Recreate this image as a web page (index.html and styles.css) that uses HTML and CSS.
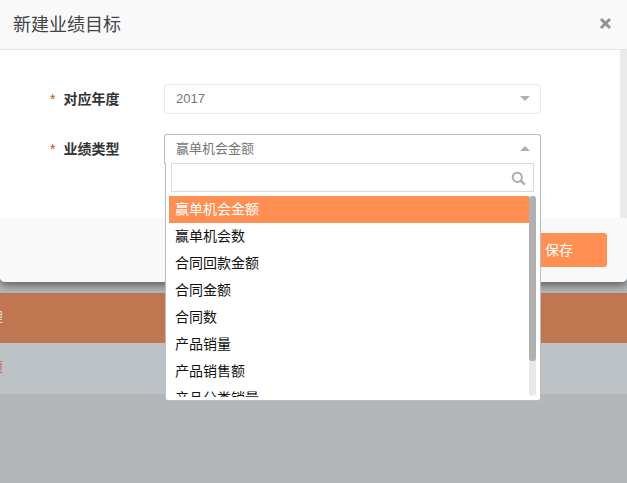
FILE: index.html
```html
<!DOCTYPE html>
<html lang="zh-CN">
  <head>
    <meta charset="UTF-8" />
    <meta name="viewport" content="width=device-width, initial-scale=1.0" />
    <title>新建业绩目标</title>
    <link rel="stylesheet" href="styles.css">
  </head>
  <body>
    <!-- page behind the backdrop -->
    <div class="page">
      <div class="band"><span>管理</span></div>
      <div class="row"><span>选项</span></div>
    </div>

    <div class="modal">
      <header class="modal-head">
        <h1>新建业绩目标</h1>
        <svg class="close" width="13" height="13" viewBox="0 0 13 13">
          <path d="M2 2l9 9M11 2l-9 9" stroke="#8f9397" stroke-width="3" fill="none" />
        </svg>
      </header>
      <div class="modal-body">
        <div class="field">
          <label><i>*</i>对应年度</label>
          <div class="select">
            <span>2017</span>
            <b class="caret down"></b>
          </div>
        </div>
        <div class="field">
          <label><i>*</i>业绩类型</label>
          <div class="select open">
            <span>赢单机会金额</span>
            <b class="caret up"></b>
          </div>
        </div>
      </div>
      <footer class="modal-foot">
        <button class="save">保存</button>
      </footer>
    </div>

    <div class="dropdown">
      <div class="search">
        <svg width="16" height="16" viewBox="0 0 16 16">
          <circle cx="6.3" cy="7.3" r="4.6" stroke="#a9adb1" stroke-width="2" fill="none" />
          <path d="M9.7 10.7l4 4" stroke="#a9adb1" stroke-width="2.4" fill="none" />
        </svg>
      </div>
      <div class="list">
        <ul>
          <li class="active">赢单机会金额</li>
          <li>赢单机会数</li>
          <li>合同回款金额</li>
          <li>合同金额</li>
          <li>合同数</li>
          <li>产品销量</li>
          <li>产品销售额</li>
          <li>产品分类销量</li>
        </ul>
        <div class="track"><div class="thumb"></div></div>
      </div>
    </div>
  </body>
</html>
```

FILE: styles.css
```css
html,
body {
  margin: 0;
  height: 100%;
  overflow: hidden;
}
body {
  position: relative;
  background: #b2b6b9;
  font-family: "Liberation Sans", "Noto Sans CJK SC", sans-serif;
  font-size: 14px;
  color: #333;
}

/* page behind */
.page {
  padding-top: 293px;
}
.band {
  height: 50px;
  line-height: 48px;
  background: #c07650;
  color: #e6d6cc;
  overflow: hidden;
}
.row {
  height: 51px;
  line-height: 48px;
  background: #bdc2c6;
  border-bottom: 1px solid #b4b8bb;
  color: #c07650;
  overflow: hidden;
}
.band span,
.row span {
  margin-left: -25px;
}

/* modal */
.modal {
  position: absolute;
  left: 0;
  top: 0;
  width: 627px;
  height: 282px;
  display: flex;
  flex-direction: column;
  background: #fff;
  border-radius: 0 0 5px 5px;
  box-shadow: 0 3px 9px rgba(0, 0, 0, 0.5);
}
.modal-head {
  display: flex;
  align-items: center;
  justify-content: space-between;
  padding: 0 15px 0 13px;
  height: 49px;
  background: #f9f9f9;
  border-bottom: 1px solid #e5e5e5;
}
.modal-head h1 {
  margin: 0 0 4px;
  font-size: 18px;
  font-weight: 400;
  color: #444;
}
.close {
  margin-bottom: 2px;
}
.modal-body {
  flex: 1;
  padding-top: 34px;
  border-right: 7px solid #eaeaea;
  box-sizing: border-box;
}
.field {
  display: flex;
  align-items: center;
  height: 30px;
  margin-bottom: 20px;
}
.field label {
  width: 164px;
  box-sizing: border-box;
  padding: 0 0 2px 50px;
  font-weight: 700;
  color: #333;
}
.field i {
  font-style: normal;
  font-weight: 400;
  color: #d9480f;
  margin-right: 8px;
}
.select {
  width: 377px;
  height: 30px;
  box-sizing: border-box;
  display: flex;
  align-items: center;
  justify-content: space-between;
  padding: 0 10px 2px 11px;
  border: 1px solid #e8e8e8;
  border-radius: 3px;
  color: #777;
}
.select span {
  font-size: 13px;
}
.select.open {
  border-color: #b9bec5;
  border-bottom: 0;
  border-radius: 3px 3px 0 0;
}
.select.open span {
  margin-bottom: 2px;
}
.caret {
  width: 0;
  height: 0;
  border-left: 5px solid transparent;
  border-right: 5px solid transparent;
}
.caret.down {
  border-top: 5px solid #b0b0b0;
}
.caret.up {
  border-bottom: 5px solid #b0b0b0;
}
.modal-foot {
  height: 64px;
  display: flex;
  justify-content: flex-end;
  align-items: flex-start;
  padding: 15px 20px 0 0;
  box-sizing: border-box;
  background: #f9f9f9;
  border-radius: 0 0 5px 5px;
}
.save {
  width: 120px;
  height: 34px;
  padding: 0 34px 2px 0;
  border: 0;
  border-radius: 3px;
  background: #ff8f53;
  color: #fff;
  font: inherit;
  text-align: right;
}

/* open select list, lies over the modal */
.dropdown {
  position: absolute;
  left: 165px;
  top: 163px;
  width: 376px;
  height: 238px;
  box-sizing: border-box;
  background: #fff;
  border: 1px solid #b9bec5;
  border-top: 0;
  border-radius: 0 0 3px 3px;
}
.search {
  height: 29px;
  box-sizing: border-box;
  margin: 0 6px 4px 5px;
  padding-right: 6px;
  display: flex;
  align-items: center;
  justify-content: flex-end;
  border: 1px solid #d8dbe3;
}
.list {
  display: flex;
  height: 201px;
  margin-left: 3px;
  margin-right: 4px;
  overflow: hidden;
}
.list ul {
  flex: 1;
  margin: 0;
  padding: 0;
  list-style: none;
  color: #111;
}
.list li {
  height: 27px;
  line-height: 27px;
  padding-left: 6px;
}
.list li.active {
  background: #ff8f53;
  color: #fff;
}
.track {
  width: 7px;
  height: 200px;
  background: #e8e8e8;
  border-radius: 3px;
}
.thumb {
  height: 165px;
  background: #b0b0b0;
  border-radius: 3px;
}
```
